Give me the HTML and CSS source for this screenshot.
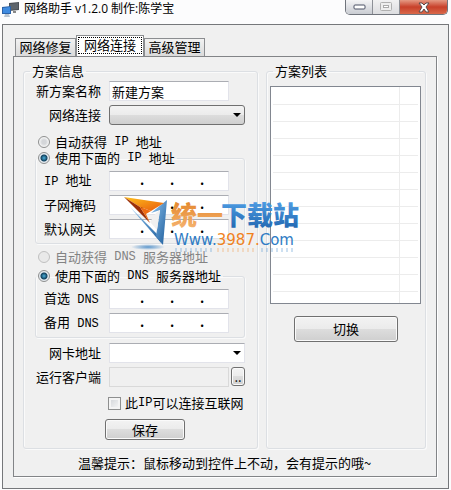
FILE: index.html
```html
<!DOCTYPE html>
<html lang="zh-CN">
<head>
  <meta charset="UTF-8">
  <meta name="viewport" content="width=device-width, initial-scale=1.0">
  <title>网络助手 v1.2.0</title>
  <link rel="stylesheet" href="styles.css">
</head>
<body>

  <header class="titlebar">
    <svg class="app-icon" width="18" height="16" viewBox="0 0 18 16">
      <path d="M7 1l10-1v8l-10 1z" fill="#4a4f55"/>
      <path d="M8 2l8-1v6l-8 1z" fill="#5d646b"/>
      <path d="M11 9h3v2h-3z" fill="#888"/>
      <path d="M0 5l9-1v8l-9 0z" fill="#2b62a8"/>
      <path d="M1 6l7-1v6l-7 0z" fill="#3f8be0"/>
      <path d="M3 12h4l1 3h-6z" fill="#b9c4cf"/>
    </svg>
    <h1>网络助手 v1.2.0 制作:陈学宝</h1>
    <div class="window-buttons">
      <button class="win-min" aria-label="最小化">
        <svg width="13" height="6" viewBox="0 0 13 6"><rect x="1" y="1" width="11" height="4" rx="1" fill="#fff" stroke="#4c5366"/></svg>
      </button>
      <button class="win-max" aria-label="最大化" disabled>
        <svg width="12" height="10" viewBox="0 0 12 10"><rect x=".5" y=".5" width="11" height="8" rx="1" fill="#eee" stroke="#b0b0b0"/><rect x="3.500" y="3.500" width="5" height="2" fill="#fff" stroke="#aaa"/></svg>
      </button>
      <button class="win-close" aria-label="关闭">
        <svg width="12" height="11" viewBox="0 0 12 11"><path d="M1 1h3l2 2 2-2h3L8 5l3 5H8L6 7 4 10H1l3-5z" fill="#fff" stroke="#5a4a4c"/></svg>
      </button>
    </div>
  </header>

  <main class="client">
    <nav class="tabs">
      <button class="tab">网络修复</button>
      <button class="tab active">网络连接</button>
      <button class="tab">高级管理</button>
    </nav>

    <div class="panel">
      <div class="columns">
        <fieldset class="group">
          <legend>方案信息</legend>
          <div class="row">
            <label for="planName">新方案名称</label>
            <input class="text-field" type="text" id="planName" value="新建方案">
          </div>
          <div class="row">
            <label for="adapter">网络连接</label>
            <div class="combo combo-button"><select id="adapter"><option></option></select></div>
          </div>

          <label class="radio radio-auto"><input type="radio" name="ip">自动获得<span class="latin"> IP </span>地址</label>
          <fieldset class="subgroup">
            <legend><label class="radio"><input type="radio" name="ip" checked>使用下面的<span class="latin"> IP </span>地址</label></legend>
            <div class="row">
              <label for="ip1"><span class="latin">IP </span>地址</label>
              <div class="ip-field"><input id="ip1"><i>.</i><input aria-label="IP 2"><i>.</i><input aria-label="IP 3"><i>.</i><input aria-label="IP 4"></div>
            </div>
            <div class="row">
              <label for="mask1">子网掩码</label>
              <div class="ip-field"><input id="mask1"><i>.</i><input aria-label="掩码 2"><i>.</i><input aria-label="掩码 3"><i>.</i><input aria-label="掩码 4"></div>
            </div>
            <div class="row">
              <label for="gate1">默认网关</label>
              <div class="ip-field"><input id="gate1"><i>.</i><input aria-label="网关 2"><i>.</i><input aria-label="网关 3"><i>.</i><input aria-label="网关 4"></div>
            </div>
          </fieldset>

          <label class="radio radio-dns disabled"><input type="radio" name="dns" disabled>自动获得<span class="latin"> DNS </span>服务器地址</label>
          <fieldset class="subgroup">
            <legend><label class="radio"><input type="radio" name="dns" checked>使用下面的<span class="latin"> DNS </span>服务器地址</label></legend>
            <div class="row">
              <label for="dnsa1">首选<span class="latin"> DNS</span></label>
              <div class="ip-field"><input id="dnsa1"><i>.</i><input aria-label="首选 2"><i>.</i><input aria-label="首选 3"><i>.</i><input aria-label="首选 4"></div>
            </div>
            <div class="row">
              <label for="dnsb1">备用<span class="latin"> DNS</span></label>
              <div class="ip-field"><input id="dnsb1"><i>.</i><input aria-label="备用 2"><i>.</i><input aria-label="备用 3"><i>.</i><input aria-label="备用 4"></div>
            </div>
          </fieldset>

          <div class="row row-mac">
            <label for="mac">网卡地址</label>
            <div class="combo"><select id="mac"><option></option></select></div>
          </div>
          <div class="row">
            <label for="client">运行客户端</label>
            <div class="browse">
              <input class="text-field" type="text" id="client" disabled>
              <button class="btn" aria-label="浏览">..</button>
            </div>
          </div>
          <label class="check"><input type="checkbox">此<span class="latin">IP</span>可以连接互联网</label>
          <button class="btn save">保存</button>
        </fieldset>

        <fieldset class="group">
          <legend>方案列表</legend>
          <div class="list">
            <table aria-label="方案列表">
              <tbody>
                <tr><td></td><td></td></tr>
                <tr><td></td><td></td></tr>
                <tr><td></td><td></td></tr>
                <tr><td></td><td></td></tr>
                <tr><td></td><td></td></tr>
                <tr><td></td><td></td></tr>
                <tr><td></td><td></td></tr>
                <tr><td></td><td></td></tr>
                <tr><td></td><td></td></tr>
                <tr><td></td><td></td></tr>
                <tr><td></td><td></td></tr>
                <tr><td></td><td></td></tr>
                <tr class="last"><td></td><td></td></tr>
              </tbody>
            </table>
          </div>
          <button class="btn switch">切换</button>
        </fieldset>
      </div>
      <p class="tip">温馨提示：鼠标移动到控件上不动，会有提示的哦~</p>
    </div>
  </main>

  <svg class="watermark" width="180" height="62" viewBox="0 0 180 62">
    <defs>
      <linearGradient id="orange" x1="0" y1="0" x2="1" y2="1">
        <stop offset="0" stop-color="#ffc21c"/><stop offset="1" stop-color="#e8590c"/>
      </linearGradient>
      <linearGradient id="gold" x1="0" y1="0" x2="0" y2="1">
        <stop offset="0" stop-color="#e07d1c"/><stop offset="1" stop-color="#f7b878"/>
      </linearGradient>
      <linearGradient id="blue" x1="0" y1="0" x2="0" y2="1">
        <stop offset="0" stop-color="#58a8ee"/><stop offset="1" stop-color="#1d62ac"/>
      </linearGradient>
      <linearGradient id="blade" x1="0" y1="0" x2="1" y2="1">
        <stop offset="0" stop-color="#8fc4ee"/><stop offset="1" stop-color="#1c5c9c"/>
      </linearGradient>
      <radialGradient id="shade">
        <stop offset="0" stop-color="#5b96cc"/><stop offset="1" stop-color="#5b96cc" stop-opacity="0"/>
      </radialGradient>
    </defs>
    <ellipse cx="28" cy="52" rx="17" ry="3" fill="url(#shade)"/>
    <path d="M10 12L38 40 42 49z" fill="url(#blade)"/>
    <path d="M47 5L43 50 36 41 40 15 31 18z" fill="url(#blade)"/>
    <path d="M36 18L40 15 37 35 30 27z" fill="#f0f0f0"/>
    <path d="M4 2L44 8 31 16 20 12z" fill="url(#orange)"/>
    <path d="M4 2L20 12 30 28 23 21z" fill="#9c3008"/>
    <path d="M20 12L31 16 26 19 30 28z" fill="#ee6b13"/>
    <g class="mark-name">
      <text x="51" y="30" fill="url(#gold)">统一</text>
      <text x="101" y="30" fill="url(#blue)">下载站</text>
    </g>
    <text class="mark-url" x="54" y="50" fill="#2f7cc4">Www.<tspan fill="#f0821e">3987.</tspan>Com</text>
    <g class="mark-echo">
      <path d="M55 55H92M141 55H175" stroke="#5d9bd3"/>
      <path d="M97 55H136" stroke="#f0a35a"/>
    </g>
  </svg>

</body>
</html>
```
FILE: styles.css
```css
* {
  box-sizing: border-box;
}

body {
  margin: 0;
  position: relative;
  background-color: #fcfcfd;
  color: #000;
  font-family: "Noto Sans CJK SC", sans-serif;
  font-size: 13px;
  line-height: 16px;
}

button, input, select {
  font: inherit;
  color: inherit;
  margin: 0;
  padding: 0;
}

fieldset {
  margin: 0;
  padding: 0;
  min-width: 0;
  border: 1px solid #dcdfe3;
  border-radius: 3px;
  box-shadow: inset 1px 1px #fafafa, 1px 1px #fafafa;
}

legend {
  padding: 0 2px;
}

.latin {
  font-family: "Liberation Mono", monospace;
  font-size: 12px;
  white-space: pre;
}

/* title bar */
.titlebar {
  display: flex;
  align-items: flex-start;
  height: 24px;
  padding: 0 3px 0 2px;
}

.app-icon {
  margin-top: 2px;
}

.titlebar h1 {
  flex: 1;
  margin: 1px 0 0 4px;
  font-family: "Open Sans", "Noto Sans CJK SC", sans-serif;
  font-size: 12px;
  font-weight: normal;
  line-height: 16px;
}

.window-buttons {
  display: flex;
  height: 15px;
  border: 1px solid #70747c;
  border-top: none;
  border-radius: 0 0 5px 5px;
  overflow: hidden;
}

.window-buttons button {
  display: flex;
  justify-content: center;
  align-items: center;
  width: 27px;
  border: none;
  border-right: 1px solid #8d9097;
  background: linear-gradient(#f4f4f6, #c9ccd2);
}

.window-buttons .win-min {
  align-items: flex-end;
  padding-bottom: 4px;
}

.window-buttons .win-max {
  background: linear-gradient(#f1f1f2, #dcdde0);
}

.window-buttons .win-close {
  width: 47px;
  border-right: none;
  background: linear-gradient(#e59a84, #c8402a 50%, #d9694a);
}

/* client area */
.client {
  margin: 0 2px 2px;
  padding: 10px 11px 11px 10px;
  border: 1px solid #75777a;
  background-color: #f0f0f0;
}

.tabs {
  display: flex;
  align-items: flex-end;
  padding-left: 2px;
}

.tab {
  height: 18px;
  width: 61px;
  padding-bottom: 2px;
  border: 1px solid #8b8d90;
  border-bottom: none;
  background: linear-gradient(#f2f2f2, #dadada);
  line-height: 15px;
  white-space: nowrap;
}

.tab.active {
  width: 68px;
  height: 21px;
  padding-bottom: 3px;
  background: #fff;
  outline: 1px dotted #000;
  outline-offset: -3px;
}

.panel {
  padding: 6px 10px 5px 9px;
  border: 1px solid #828487;
  background-color: #f0f0f0;
  box-shadow: 1px 1px #fff;
}

.columns {
  display: grid;
  grid-template-columns: minmax(0, 1fr) 160px;
  gap: 8px;
}

.group {
  padding-bottom: 8px;
}

.group > legend {
  margin-left: 6px;
}

.row {
  display: grid;
  grid-template-columns: 77px 1fr;
  gap: 8px;
  align-items: center;
  margin: 0 12px 4px 0;
}

.row > label {
  text-align: right;
  white-space: nowrap;
}

legend + .row {
  margin-top: 2px;
}

.text-field {
  width: 120px;
  height: 20px;
  padding: 0 2px;
  border: 1px solid #e2e3ea;
  border-top-color: #abadb3;
  background-color: #fff;
}

.text-field:disabled {
  background-color: #f0f0f0;
  border-color: #d9d9d9;
}

.combo {
  position: relative;
}

.combo select {
  display: block;
  width: 100%;
  height: 20px;
  appearance: none;
  border: 1px solid #e2e3ea;
  border-top-color: #abadb3;
  border-radius: 0;
  background: #fff;
}

.combo::after {
  content: "";
  position: absolute;
  right: 4px;
  top: 8px;
  border: 4px solid transparent;
  border-top-color: #000;
  border-bottom: none;
}

.combo-button select {
  border: 1px solid #707070;
  border-radius: 3px;
  background: linear-gradient(#f3f3f3, #ebebeb 50%, #dddddd 50%, #cfcfcf);
}

/* radios and check box */
.radio, .check {
  display: flex;
  align-items: center;
  height: 16px;
  white-space: nowrap;
}

.radio input {
  appearance: none;
  width: 12px;
  height: 12px;
  margin-right: 5px;
  border: 1px solid #8e8f8f;
  border-radius: 50%;
  background: radial-gradient(#d4d6d9 30%, #f8f8f8 70%);
}

.radio input:checked {
  background: radial-gradient(circle, #4bb0dc 0, #12425f 3px, #e6ebf0 4px);
}

.radio input:disabled {
  border-color: #c0c0c0;
  background: #e9e9e9;
}

.radio-auto {
  margin: 9px 0 0 14px;
}

.radio-dns {
  margin: 5px 0 3px 14px;
}

.disabled {
  color: #838383;
}

.subgroup {
  margin: 0 12px 0 11px;
  padding-top: 3px;
}

.subgroup .row {
  grid-template-columns: 57px 120px;
  padding-left: 8px;
}

.subgroup .row > label {
  text-align: left;
}

.ip-field {
  display: grid;
  grid-template-columns: 27px 3px 27px 3px 27px 3px 1fr;
  height: 20px;
  padding-left: 3px;
  border: 1px solid #e2e3ea;
  border-top-color: #abadb3;
  background-color: #fff;
}

.ip-field input {
  width: 100%;
  border: none;
  background: none;
}

.ip-field i {
  font-style: normal;
  font-weight: bold;
  line-height: 16px;
}

.row-mac {
  margin-top: 5px;
}

.browse {
  display: flex;
  gap: 2px;
}

.btn {
  border: 1px solid #707070;
  border-radius: 3px;
  background: linear-gradient(#f3f3f3, #ebebeb 50%, #dddddd 50%, #cfcfcf);
  box-shadow: inset 0 0 0 1px #fafafa;
}

.browse .btn {
  width: 14px;
  height: 19px;
  line-height: 16px;
}

.check {
  margin: 8px 0 8px 84px;
}

.check input {
  appearance: none;
  width: 13px;
  height: 13px;
  margin-right: 4px;
  border: 1px solid #8e8f8f;
  background: linear-gradient(135deg, #cfd2d6, #fafafa);
  box-shadow: inset 0 0 0 2px #f4f4f4;
}

.save {
  display: block;
  width: 80px;
  height: 21px;
  margin-left: 81px;
  line-height: 18px;
}

/* plan list */
.list {
  margin: 7px 4px 12px 3px;
  padding: 0 2px;
  border: 1px solid #828790;
  background-color: #fff;
}

.list table {
  width: 100%;
  border-collapse: collapse;
  table-layout: fixed;
}

.list td {
  height: 17px;
  padding: 0;
  border-bottom: 1px solid #ececec;
}

.list td + td {
  width: 19px;
  border-left: 1px solid #ececec;
}

.list .last td {
  height: 12px;
  border-bottom: none;
}

.switch {
  display: block;
  width: 104px;
  height: 26px;
  margin: 0 auto;
}

.tip {
  margin: 6px 0 0;
  text-align: center;
  white-space: nowrap;
}

/* site mark lying over the window */
.watermark {
  position: absolute;
  left: 120px;
  top: 195px;
  pointer-events: none;
}

.mark-name {
  font-size: 26px;
  font-weight: 900;
}

.mark-url {
  font-family: "DejaVu Sans", sans-serif;
  font-size: 15px;
}

.mark-echo {
  fill: none;
  stroke-width: 4;
  stroke-dasharray: 2 3;
  opacity: 0.3;
}
```
